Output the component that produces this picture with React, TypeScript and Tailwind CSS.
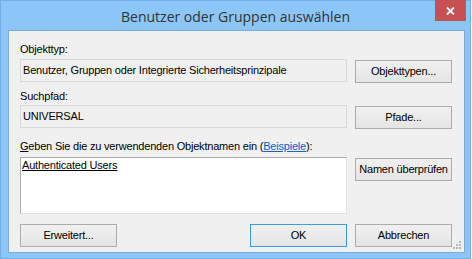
import React from "react";

const font = { fontFamily: '"Liberation Sans", Arial, sans-serif' };

function Button({
  label,
  width = "w-[97px]",
  isDefault = false,
  className = "",
}: {
  label: React.ReactNode;
  width?: string;
  isDefault?: boolean;
  className?: string;
}) {
  return (
    <div
      className={`${width} h-[23px] flex items-center justify-center border bg-gradient-to-b from-[#f0f0f0] to-[#e5e5e5] text-[11px] text-black ${
        isDefault ? "border-[#3c9be8]" : "border-[#acacac]"
      } ${className}`}
    >
      {label}
    </div>
  );
}

function ReadOnlyField({ value }: { value: string }) {
  return (
    <div className="w-[327px] h-[23px] flex items-center pl-[2px] border border-[#d9d9d9] bg-[#f0f0f0] text-[11px] text-black">
      {value}
    </div>
  );
}

function ResizeGrip() {
  const dots = [
    [6, 0],
    [3, 3],
    [6, 3],
    [0, 6],
    [3, 6],
    [6, 6],
  ];
  return (
    <div className="absolute right-[2px] bottom-[2px] w-[9px] h-[9px]">
      {dots.map(([x, y], i) => (
        <div
          key={i}
          className="absolute w-[2px] h-[2px] bg-[#b9b9b9]"
          style={{ left: x, top: y }}
        />
      ))}
    </div>
  );
}

export default function App() {
  return (
    <div className="w-[472px] h-[259px] bg-white" style={font}>
      <div className="w-[471px] h-[259px] bg-[#8cc6f8] border border-[#73aee6] flex flex-col">
        {/* title bar */}
        <div className="relative h-[29px] flex justify-center">
          <span
            className="mt-[6px] text-[14px] leading-[20px] text-[#333333]"
            style={{ fontFamily: '"Open Sans", "Noto Sans", sans-serif' }}
          >
            Benutzer oder Gruppen auswählen
          </span>
          <div className="absolute right-[4px] top-[-1px] w-[31px] h-[21px] bg-[#c75050] flex items-center justify-center">
            <svg width="9" height="8" viewBox="0 0 9 8">
              <path d="M1 0.5 L8 7.5 M8 0.5 L1 7.5" stroke="white" strokeWidth="1.8" />
            </svg>
          </div>
        </div>

        {/* client area */}
        <div className="relative ml-[7px] w-[457px] h-[223px] border border-[#79acdf] bg-[#f0f0f0] pl-[11px] text-[11px] leading-[13px] tracking-[-0.2px] text-black">
          <div className="mt-[12px] h-[13px]">Objekttyp:</div>
          <div className="mt-[3px] flex gap-[8px] items-start">
            <ReadOnlyField value="Benutzer, Gruppen oder Integrierte Sicherheitsprinzipale" />
            <Button label="Objekttypen..." className="mt-[1px]" />
          </div>

          <div className="mt-[7px] h-[13px]">Suchpfad:</div>
          <div className="mt-[2px] flex gap-[8px] items-start">
            <ReadOnlyField value="UNIVERSAL" />
            <Button label="Pfade..." className="mt-[1px]" />
          </div>

          <div className="mt-[11px] h-[13px]">
            <span className="underline">G</span>eben Sie die zu verwendenden Objektnamen ein (
            <span className="text-[#0066cc] underline">Beispiele</span>):
          </div>
          <div className="mt-[4px] flex gap-[8px] items-start">
            <div className="w-[327px] h-[57px] bg-white border border-[#e3e3e3] border-t-[#abadb3] border-l-[#abadb3] pl-[1px] pt-[1px]">
              <span className="underline">Authenticated Users</span>
            </div>
            <Button label="Namen überprüfen" className="mt-[1px]" />
          </div>

          <div className="mt-[10px] flex items-start">
            <Button label="Erweitert..." />
            <div className="ml-[133px] flex gap-[8px]">
              <Button label="OK" isDefault />
              <Button label="Abbrechen" />
            </div>
          </div>

          <ResizeGrip />
        </div>
      </div>
    </div>
  );
}
